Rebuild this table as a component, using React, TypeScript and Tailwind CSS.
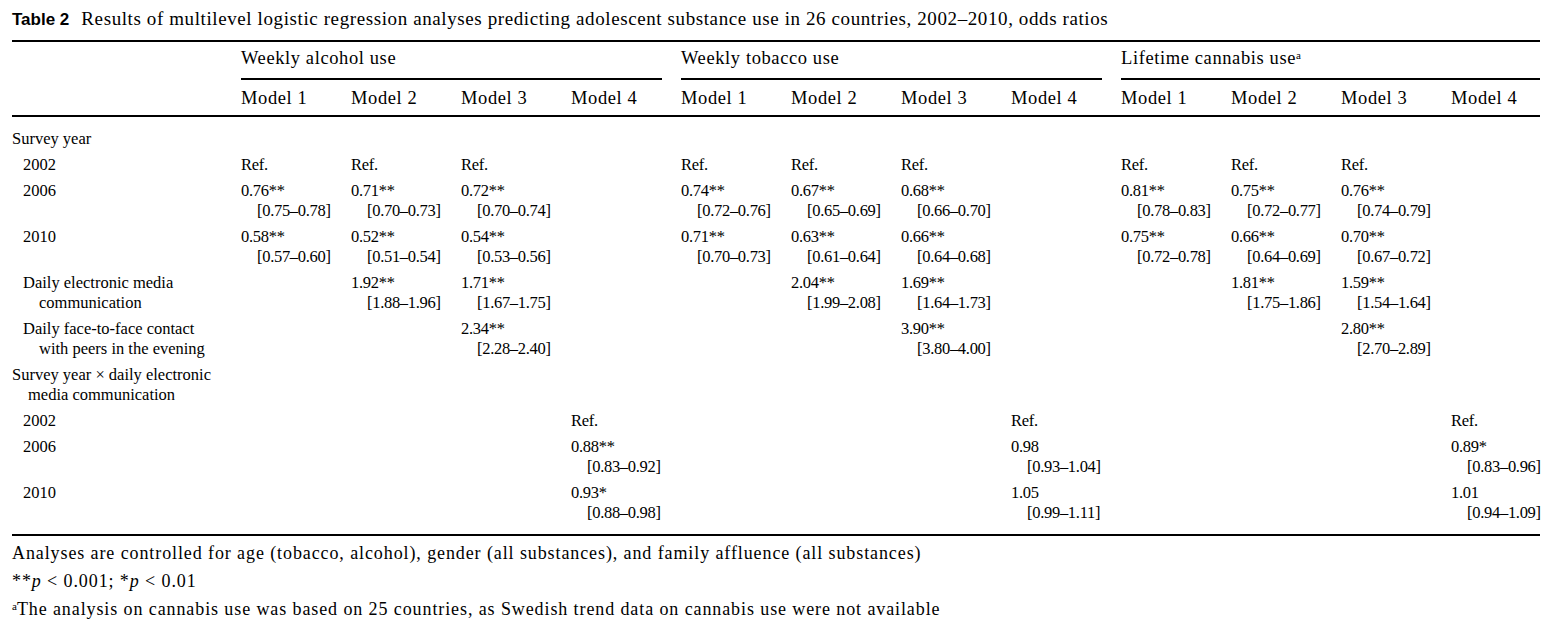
import React from "react";

type Cell = null | [string] | [string, string];

type Row = {
  label: string[];
  indent: number;
  cells: Cell[];
};

const serif = "font-['Liberation_Serif','Times_New_Roman',serif]";

const groups = [
  { title: "Weekly alcohol use", sup: "" },
  { title: "Weekly tobacco use", sup: "" },
  { title: "Lifetime cannabis use", sup: "a" },
];

const r = (v: string, ci?: string): Cell => (ci ? [v, ci] : [v]);
const _ = null;

const rows: Row[] = [
  { label: ["Survey year"], indent: 0, cells: [] },
  {
    label: ["2002"],
    indent: 1,
    cells: [r("Ref."), r("Ref."), r("Ref."), _, r("Ref."), r("Ref."), r("Ref."), _, r("Ref."), r("Ref."), r("Ref."), _],
  },
  {
    label: ["2006"],
    indent: 1,
    cells: [
      r("0.76**", "[0.75–0.78]"), r("0.71**", "[0.70–0.73]"), r("0.72**", "[0.70–0.74]"), _,
      r("0.74**", "[0.72–0.76]"), r("0.67**", "[0.65–0.69]"), r("0.68**", "[0.66–0.70]"), _,
      r("0.81**", "[0.78–0.83]"), r("0.75**", "[0.72–0.77]"), r("0.76**", "[0.74–0.79]"), _,
    ],
  },
  {
    label: ["2010"],
    indent: 1,
    cells: [
      r("0.58**", "[0.57–0.60]"), r("0.52**", "[0.51–0.54]"), r("0.54**", "[0.53–0.56]"), _,
      r("0.71**", "[0.70–0.73]"), r("0.63**", "[0.61–0.64]"), r("0.66**", "[0.64–0.68]"), _,
      r("0.75**", "[0.72–0.78]"), r("0.66**", "[0.64–0.69]"), r("0.70**", "[0.67–0.72]"), _,
    ],
  },
  {
    label: ["Daily electronic media", "communication"],
    indent: 1,
    cells: [
      _, r("1.92**", "[1.88–1.96]"), r("1.71**", "[1.67–1.75]"), _,
      _, r("2.04**", "[1.99–2.08]"), r("1.69**", "[1.64–1.73]"), _,
      _, r("1.81**", "[1.75–1.86]"), r("1.59**", "[1.54–1.64]"), _,
    ],
  },
  {
    label: ["Daily face-to-face contact", "with peers in the evening"],
    indent: 1,
    cells: [
      _, _, r("2.34**", "[2.28–2.40]"), _,
      _, _, r("3.90**", "[3.80–4.00]"), _,
      _, _, r("2.80**", "[2.70–2.89]"), _,
    ],
  },
  { label: ["Survey year × daily electronic", "media communication"], indent: 0, cells: [] },
  {
    label: ["2002"],
    indent: 1,
    cells: [_, _, _, r("Ref."), _, _, _, r("Ref."), _, _, _, r("Ref.")],
  },
  {
    label: ["2006"],
    indent: 1,
    cells: [
      _, _, _, r("0.88**", "[0.83–0.92]"),
      _, _, _, r("0.98", "[0.93–1.04]"),
      _, _, _, r("0.89*", "[0.83–0.96]"),
    ],
  },
  {
    label: ["2010"],
    indent: 1,
    cells: [
      _, _, _, r("0.93*", "[0.88–0.98]"),
      _, _, _, r("1.05", "[0.99–1.11]"),
      _, _, _, r("1.01", "[0.94–1.09]"),
    ],
  },
];

const models = Array.from({ length: 12 }, (_, i) => `Model ${(i % 4) + 1}`);

const App = () => {
  return (
    <div className={`w-[1556px] h-[630px] bg-white text-black pl-[12px] pt-[9px] ${serif}`}>
      {/* Caption */}
      <div className="h-[20px] leading-[20px] text-[19px] tracking-[0.6px] whitespace-nowrap">
        <span className="font-['Liberation_Sans',Arial,sans-serif] font-bold text-[17px] tracking-normal">Table 2</span>
        <span className="ml-[12px]">
          Results of multilevel logistic regression analyses predicting adolescent substance use in 26 countries,
          2002–2010, odds ratios
        </span>
      </div>

      <table className="mt-[11px] w-[1528px] table-fixed border-collapse">
        <colgroup>
          <col className="w-[229px]" />
          {models.map((_, i) => (
            <col key={i} className={i === 11 ? "w-[89px]" : "w-[110px]"} />
          ))}
        </colgroup>
        <thead className="text-[18.5px] tracking-[0.6px] font-normal">
          <tr>
            <th className="border-t-2 border-black p-0" />
            {groups.map((g, i) => (
              <th key={i} colSpan={4} className="border-t-2 border-black p-0 text-left font-normal">
                <div
                  className={`pt-[6px] pb-[10px] leading-[20px] border-b-2 border-black whitespace-nowrap ${i < 2 ? "mr-[19px]" : ""}`}
                >
                  {g.title}
                  {g.sup && <sup className="text-[11px] tracking-normal">{g.sup}</sup>}
                </div>
              </th>
            ))}
          </tr>
          <tr>
            <th className="border-b-2 border-black p-0" />
            {models.map((m, i) => (
              <th
                key={i}
                className="border-b-2 border-black pt-[8px] pb-[7px] px-0 leading-[20px] text-left font-normal whitespace-nowrap"
              >
                {m}
              </th>
            ))}
          </tr>
        </thead>
        <tbody className="text-[16.5px] leading-[20px]">
          <tr>
            <td colSpan={13} className="h-[10px] p-0" />
          </tr>
          {rows.map((row, ri) => (
            <tr key={ri}>
              <td className={`py-[3px] pr-0 align-top ${row.indent ? "pl-[11px]" : "pl-0"}`}>
                {row.label.map((l, li) => (
                  <div key={li} className={`whitespace-nowrap ${li > 0 ? "pl-[16px]" : ""}`}>
                    {l}
                  </div>
                ))}
              </td>
              {Array.from({ length: 12 }, (_, ci) => {
                const c = row.cells[ci] ?? null;
                return (
                  <td key={ci} className="py-[3px] px-0 align-top whitespace-nowrap tracking-[-0.3px]">
                    {c && (
                      <>
                        <div>{c[0]}</div>
                        {c[1] && <div className="pl-[16px]">{c[1]}</div>}
                      </>
                    )}
                  </td>
                );
              })}
            </tr>
          ))}
          <tr>
            <td colSpan={13} className="h-[9px] p-0 border-b-2 border-black" />
          </tr>
        </tbody>
      </table>

      {/* Footnotes */}
      <div className="text-[18px] tracking-[0.9px] leading-[28px] mt-[3px] whitespace-nowrap">
        <p>Analyses are controlled for age (tobacco, alcohol), gender (all substances), and family affluence (all substances)</p>
        <p>
          **<i>p</i> &lt; 0.001; *<i>p</i> &lt; 0.01
        </p>
        <p>
          <sup className="text-[11px] tracking-normal">a</sup>The analysis on cannabis use was based on 25 countries, as
          Swedish trend data on cannabis use were not available
        </p>
      </div>
    </div>
  );
};

export default App;
